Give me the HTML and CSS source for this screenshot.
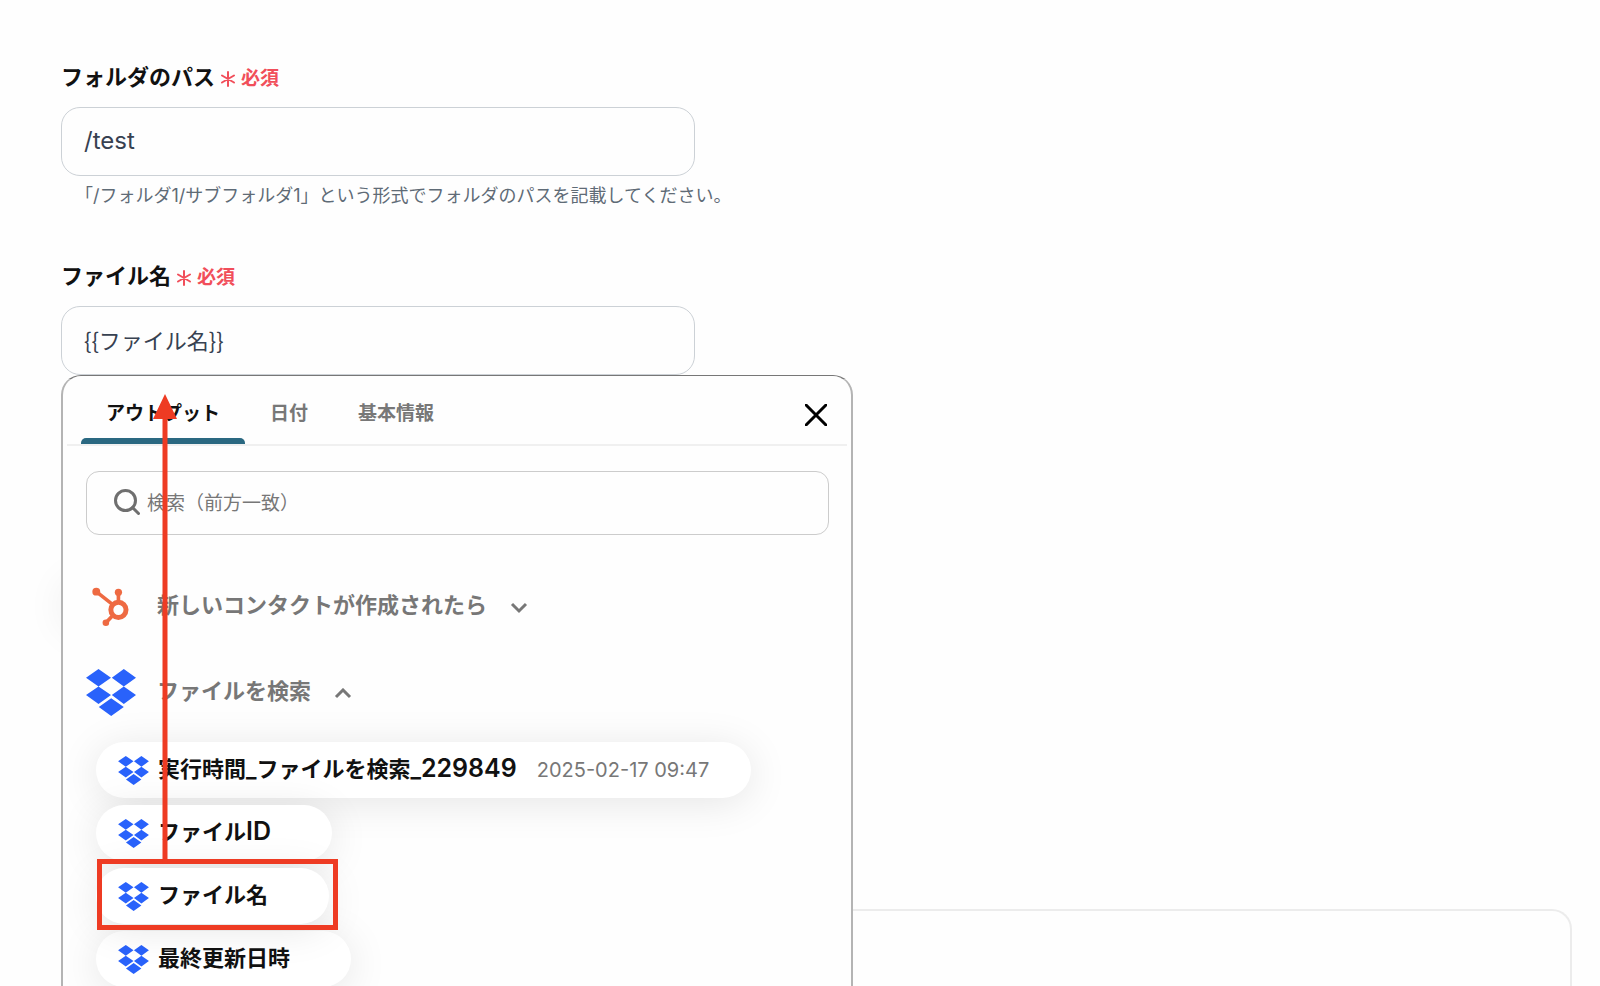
FILE: index.html
```
<!DOCTYPE html>
<html lang="ja">
<head>
    <meta charset="UTF-8">
    <meta name="viewport" content="width=device-width, initial-scale=1.0">
    <title>ファイルを検索</title>
    <link rel="stylesheet" href="styles.css">
</head>
<body>
    <svg class="sprite" aria-hidden="true">
        <symbol id="dropbox" viewBox="0 0 50 47">
            <path d="M12.5 0L25 8.7L12.5 17.4L0 8.7ZM37.8 0L50 8.7L37.8 17.4L25.8 8.7ZM12.5 17.4L25 26.1L12.5 35L0 26.1ZM37.8 17.4L50 26.1L37.8 35L25.8 26.1ZM25.2 29.3L37.8 38L25.2 47L12.8 38Z" fill="#2962fb"/>
        </symbol>
    </svg>

    <main class="page">
        <div class="field">
            <label for="folderPath">フォルダのパス <span class="required"><svg class="star" viewBox="0 0 14 14"><path d="M7 0V14M1 3.5L13 10.5M13 3.5L1 10.5"/></svg>必須</span></label>
            <input type="text" class="path" id="folderPath" value="/test">
            <p class="hint">「/フォルダ1/サブフォルダ1」という形式でフォルダのパスを記載してください。</p>
        </div>

        <div class="field file-field">
            <label for="fileName">ファイル名 <span class="required"><svg class="star" viewBox="0 0 14 14"><path d="M7 0V14M1 3.5L13 10.5M13 3.5L1 10.5"/></svg>必須</span></label>
            <input type="text" id="fileName" value="{{ファイル名}}">

            <div class="panel">
                <div class="tabs">
                    <button class="tab active">アウトプット</button>
                    <button class="tab">日付</button>
                    <button class="tab">基本情報</button>
                    <button class="close" aria-label="閉じる">
                        <svg viewBox="0 0 22 22"><path d="M1 1L21 21M21 1L1 21"/></svg>
                    </button>
                </div>

                <div class="search">
                    <svg viewBox="0 0 26 26"><circle cx="11.5" cy="11.5" r="10"/><path d="M18.5 18.5L24.5 24.5"/></svg>
                    <input type="search" aria-label="検索" placeholder="検索（前方一致）">
                </div>

                <button class="group">
                    <span class="app-icon">
                        <svg class="hubspot" viewBox="156 408 112 118">
                            <path d="M169 422L216 459M236 424V452M198 516L216 497"/>
                            <circle class="ring" cx="236" cy="477" r="23"/>
                            <circle class="dot" cx="169" cy="422" r="12"/>
                            <circle class="dot" cx="236" cy="424" r="11"/>
                            <circle class="dot" cx="198" cy="516" r="10"/>
                        </svg>
                    </span>
                    <span class="name">新しいコンタクトが作成されたら</span>
                    <svg class="chevron" viewBox="0 0 18 12"><path d="M2 2L9 9L16 2"/></svg>
                </button>

                <button class="group">
                    <span class="app-icon"><svg class="dropbox"><use href="#dropbox"/></svg></span>
                    <span class="name">ファイルを検索</span>
                    <svg class="chevron" viewBox="0 0 18 12"><path d="M2 9L9 2L16 9"/></svg>
                </button>

                <div class="outputs">
                    <button class="pill"><svg><use href="#dropbox"/></svg><span class="name">実行時間_ファイルを検索_<span class="num">229849</span></span><span class="date">2025-02-17 09:47</span></button>
                    <button class="pill"><svg><use href="#dropbox"/></svg><span class="name">ファイル<span class="num">ID</span></span></button>
                    <div class="picked">
                        <button class="pill"><svg><use href="#dropbox"/></svg><span class="name">ファイル名</span></button>
                        <div class="mark">
                            <svg class="arrow" viewBox="0 0 24 470"><path d="M12 0L24 25H14.5V470H9.5V25H0Z"/></svg>
                        </div>
                    </div>
                    <button class="pill"><svg><use href="#dropbox"/></svg><span class="name">最終更新日時</span></button>
                </div>
            </div>
        </div>

        <div class="behind"></div>
        <section class="card"></section>
    </main>
</body>
</html>
```
FILE: styles.css
```
* {
    box-sizing: border-box;
}
body {
    margin: 0;
    background-color: #fefefe;
    color: #111;
    font-family: Inter, "Noto Sans CJK JP", sans-serif;
}
button, input {
    font-family: inherit;
}
button {
    background: none;
    border: none;
    padding: 0;
    cursor: pointer;
}
svg {
    display: block;
    flex-shrink: 0;
}
.sprite {
    position: absolute;
    width: 0;
    height: 0;
}

.page {
    display: flex;
    flex-direction: column;
    height: 100vh;
    overflow: hidden;
    padding: 60px 28px 0 61px;
}

.field {
    position: relative;
    width: 100%;
    max-width: 634px;
}
.field label {
    display: flex;
    align-items: center;
    height: 30px;
    margin-bottom: 17px;
    font-size: 22px;
    font-weight: 700;
}
.required {
    display: flex;
    align-items: center;
    gap: 6px;
    margin-left: 6px;
    padding-top: 2px;
    color: #f14e5a;
    font-size: 19px;
}
.star {
    width: 14px;
    height: 14px;
    margin-top: 6px;
    stroke: #f14e5a;
    stroke-width: 2;
    stroke-linecap: round;
    overflow: visible;
}
.field > input {
    display: block;
    width: 100%;
    height: 69px;
    padding: 0 22px 4px;
    border: 1px solid #ccd1d6;
    border-radius: 19px;
    background-color: #fefefe;
    color: #374151;
    font-family: "Noto Sans CJK JP", sans-serif;
    font-size: 22px;
}
.field > .path {
    padding-bottom: 2px;
    font-family: Inter, sans-serif;
    font-size: 24px;
}
.hint {
    margin: 8px 0 0;
    padding-left: 14px;
    height: 24px;
    color: #5f6b76;
    font-size: 18px;
    line-height: 24px;
    white-space: nowrap;
}
.file-field {
    z-index: 1;
    margin-top: 51px;
}

/* output picker */
.panel {
    position: absolute;
    top: 100%;
    left: 0;
    width: 792px;
    height: 700px;
    border: 2px solid #b4b4b4;
    border-top: 1px solid #777;
    border-radius: 20px;
    background-color: #fefefe;
}
.tabs {
    display: flex;
    height: 70px;
    margin: 0 4px;
    padding: 0 20px 0 14px;
    border-bottom: 2px solid #f0f0f0;
}
.tab {
    padding: 2px 25px 0;
    color: #777;
    font-size: 19px;
    font-weight: 700;
}
.tab.active {
    position: relative;
    color: #111;
}
.tab.active::after {
    content: "";
    position: absolute;
    left: 0;
    right: 0;
    bottom: 0;
    height: 6px;
    border-radius: 5px 5px 0 0;
    background-color: #2a6881;
}
.close {
    margin: 9px 0 0 auto;
}
.close svg {
    width: 22px;
    height: 22px;
    stroke: #000;
    stroke-width: 3;
    stroke-linecap: round;
}
.search {
    display: flex;
    align-items: center;
    gap: 7px;
    height: 64px;
    margin: 25px 22px 0 23px;
    padding-left: 27px;
    border: 1px solid #ccc;
    border-radius: 13px;
}
.search svg {
    width: 26px;
    height: 26px;
    margin-bottom: 2px;
    fill: none;
    stroke: #6f6f6f;
    stroke-width: 3;
    stroke-linecap: round;
}
.search input {
    flex: 1;
    padding: 0;
    border: none;
    outline: none;
    background: none;
    font-size: 19px;
}
.search input::placeholder {
    color: #777;
}
.group {
    display: flex;
    align-items: center;
    height: 50px;
    margin: 46px 0 0 23px;
    color: #777;
    font-size: 22px;
    font-weight: 700;
}
.group + .group {
    margin-top: 36px;
}
.name {
    padding-bottom: 6px;
}
.app-icon {
    display: flex;
    width: 50px;
    margin-right: 21px;
}
.hubspot {
    width: 37px;
    height: 39px;
    margin-left: 6px;
    fill: none;
    stroke: #ee6a42;
    stroke-width: 11;
}
.hubspot .ring {
    stroke-width: 15;
}
.hubspot .dot {
    fill: #ee6a42;
    stroke: none;
}
.dropbox {
    width: 50px;
    height: 47px;
}
.chevron {
    width: 18px;
    height: 12px;
    margin: 3px 0 0 23px;
    fill: none;
    stroke: #777;
    stroke-width: 3;
}

.outputs {
    display: flex;
    flex-direction: column;
    align-items: flex-start;
    gap: 7px;
    margin: 25px 0 0 33px;
}
.pill {
    display: flex;
    align-items: center;
    height: 56px;
    padding: 0 61px 0 22px;
    border-radius: 28px;
    background-color: #fff;
    box-shadow: 0 5px 40px rgba(0, 0, 0, 0.1);
    color: #111;
    font-size: 22px;
    font-weight: 700;
}
.pill svg {
    width: 31px;
    height: 29px;
    margin-right: 9px;
}
.pill:has(.date) {
    padding-right: 42px;
}
.num {
    font-size: 25px;
    font-weight: 600;
}
.date {
    margin-left: 20px;
    color: #777;
    font-size: 20px;
    font-weight: 400;
}
.picked {
    position: relative;
}
/* red frame round the picked output, arrow up to the input */
.mark {
    position: absolute;
    z-index: 1;
    top: -9px;
    left: 1px;
    right: -9px;
    bottom: -6px;
    border: 5px solid #ee3b23;
}
.arrow {
    position: absolute;
    left: 51px;
    bottom: 100%;
    width: 24px;
    height: 470px;
    fill: #ee3b23;
}

.behind {
    width: 320px;
    height: 56px;
    margin-top: 198px;
    border-radius: 28px;
    box-shadow: 0 5px 40px rgba(0, 0, 0, 0.07);
}
.card {
    flex: 1;
    margin-top: 280px;
    border: 2px solid #ececec;
    border-bottom: none;
    border-radius: 20px 20px 0 0;
}
```
